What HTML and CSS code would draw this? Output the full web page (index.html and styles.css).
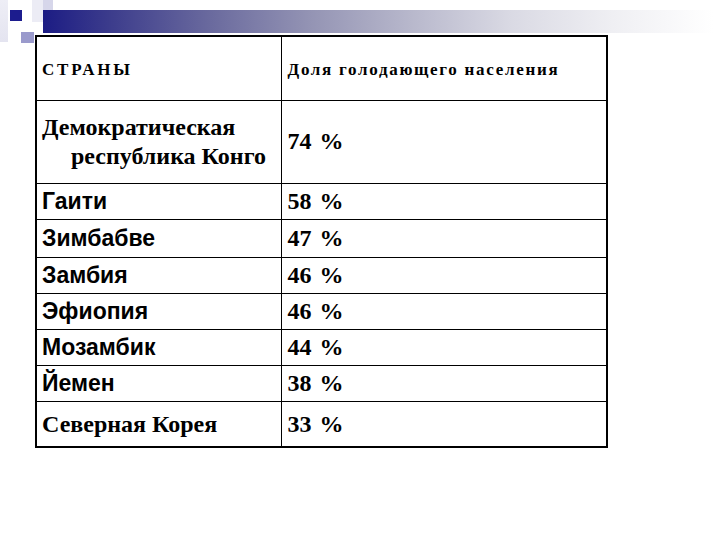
FILE: index.html
```html
<!DOCTYPE html>
<html lang="ru">
<head>
<meta charset="utf-8">
<title>Голод</title>
<link rel="stylesheet" href="styles.css">
</head>
<body>
<div class="slide">
  <div class="deco">
    <div class="edge"></div>
    <div class="sq-light"></div>
    <div class="sq-strip"></div>
    <div class="sq-dark"></div>
    <div class="sq-mid"></div>
    <div class="bar"></div>
  </div>
  <table class="data">
    <colgroup><col class="c1"><col class="c2"></colgroup>
    <tr class="r-head">
      <td class="head">СТРАНЫ</td>
      <td class="head">Доля голодающего населения</td>
    </tr>
    <tr class="r-congo">
      <td class="serif"><span class="l1">Демократическая</span><span class="l2">республика Конго</span></td>
      <td class="num">74 %</td>
    </tr>
    <tr class="r-a"><td class="sans">Гаити</td><td class="num">58 %</td></tr>
    <tr class="r-b"><td class="sans">Зимбабве</td><td class="num">47 %</td></tr>
    <tr class="r-a"><td class="sans">Замбия</td><td class="num">46 %</td></tr>
    <tr class="r-a"><td class="sans">Эфиопия</td><td class="num">46 %</td></tr>
    <tr class="r-a"><td class="sans">Мозамбик</td><td class="num">44 %</td></tr>
    <tr class="r-a"><td class="sans">Йемен</td><td class="num">38 %</td></tr>
    <tr class="r-last"><td class="serif">Северная Корея</td><td class="num">33 %</td></tr>
  </table>
</div>
</body>
</html>
```
FILE: styles.css
```css
html, body {
  margin: 0;
  padding: 0;
  background: #ffffff;
}
.slide {
  width: 720px;
  height: 540px;
  position: relative;
  overflow: hidden;
  background: #ffffff;
}
.deco {
  position: relative;
  height: 35px;
}
.edge {
  position: absolute;
  left: 0; top: 0;
  width: 8px; height: 42px;
  background: linear-gradient(to bottom, #eeeef6, #e4e4f0);
}
.sq-light {
  position: absolute;
  left: 32px; top: 0;
  width: 21px; height: 22px;
  background: #ececf5;
}
.sq-strip {
  position: absolute;
  left: 43px; top: 0;
  width: 10px; height: 10px;
  background: #d6d6ea;
}
.sq-dark {
  position: absolute;
  left: 10px; top: 10px;
  width: 12px; height: 11px;
  background: #1c1c8e;
}
.sq-mid {
  position: absolute;
  left: 21px; top: 32px;
  width: 13px; height: 11px;
  background: #9a9acc;
}
.bar {
  position: absolute;
  left: 43px; top: 10px;
  width: 670px; height: 23px;
  background: linear-gradient(to right, #1c1c84 0%, #3c3c8c 10%, #6a6a9e 25%, #9494b4 40%, #b8b8cc 55%, #dadae4 70%, #efeff3 85%, #ffffff 100%);
}
.data {
  margin-left: 35px;
  width: 571px;
  table-layout: fixed;
  border-collapse: collapse;
  border: 2px solid #000;
}
.c1 { width: 245px; }
.c2 { width: 326px; }
.data td {
  border: 1px solid #000;
  padding: 0 0 0 5px;
  vertical-align: middle;
  color: #000;
}
.data td + td { padding-left: 6px; }
.r-head td { height: 64px; padding-top: 4px; box-sizing: border-box; }
.r-congo td { height: 82px; }
.r-a td { height: 35px; }
.r-b td { height: 37px; }
.r-last td { height: 42px; padding-top: 2px; }
.head {
  font-family: "Liberation Serif", "Times New Roman", serif;
  font-weight: bold;
  font-size: 17px;
  letter-spacing: 1.7px;
  color: #933e18;
}
.data td.head:first-child { letter-spacing: 2.8px; }
.serif {
  font-family: "Liberation Serif", "Times New Roman", serif;
  font-weight: bold;
  font-size: 24px;
  line-height: 29px;
}
.l1, .l2 { display: block; }
.l2 { padding-left: 29px; }
.sans {
  font-family: "Liberation Sans", Arial, sans-serif;
  font-weight: bold;
  font-size: 23px;
}
.num {
  font-family: "Liberation Serif", "Times New Roman", serif;
  font-weight: bold;
  font-size: 24px;
  word-spacing: 2px;
}
```
